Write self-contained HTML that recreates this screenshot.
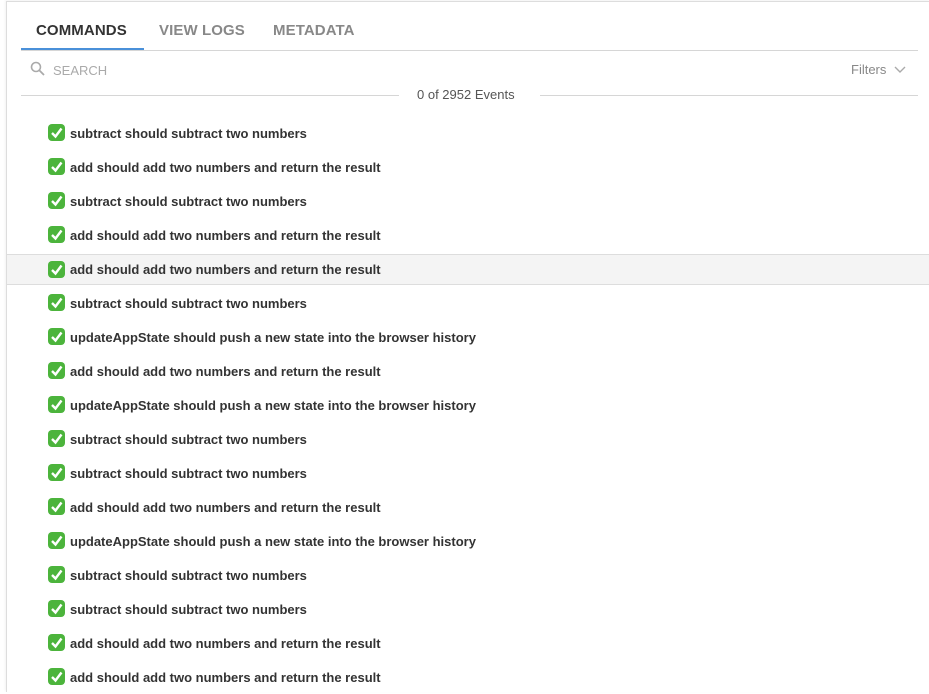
<!DOCTYPE html>
<html><head><style>
body{margin:0;width:929px;height:680px;overflow:hidden;background:#fff;font-family:"Liberation Sans",sans-serif;}
.panel{position:absolute;left:6px;top:1px;width:923px;height:690px;border-left:1px solid #ddd;border-top:1px solid #ddd;box-shadow:-1px -1px 2px rgba(0,0,0,.05);}
.tabs{position:absolute;left:21px;top:0;width:897px;height:50px;border-bottom:1px solid #d6d6d6;}
.tab{position:absolute;top:22px;font-size:15px;font-weight:bold;color:#888;letter-spacing:0.1px}
.tab.a{color:#333}
.ul{position:absolute;left:0;top:48px;width:123px;height:2px;background:#4a90d9}
.search{position:absolute;left:53px;top:63px;font-size:13px;color:#aaa}
.filters{position:absolute;left:851px;top:62px;font-size:13px;color:#888}
.cnt{position:absolute;top:88px;left:21px;width:897px;height:14px}
.cnt .l{position:absolute;top:7px;height:1px;background:#d6d6d6}
.cnt span{position:absolute;left:396px;top:-1px;font-size:13px;color:#555}
.row{position:absolute;left:7px;width:922px;height:34px;}
.row.h{background:#f4f4f4;border-top:1px solid #ddd;border-bottom:1px solid #ddd;box-sizing:border-box;height:31px;margin-top:2px}
.row.h .ck{top:6px}.row.h .t{top:7px}
.ck{position:absolute;left:41px;top:8px;width:17px;height:17px;border-radius:4px;background:#4cb43c}
.ck svg{position:absolute;left:0;top:0}
.t{position:absolute;left:63px;top:10px;font-size:13px;font-weight:bold;color:#333}
</style></head><body>
<div class="panel"></div>
<div class="tabs">
<div class="tab a" style="left:15px">COMMANDS</div>
<div class="tab" style="left:138px">VIEW LOGS</div>
<div class="tab" style="left:252px">METADATA</div>
<div class="ul"></div>
</div>
<svg style="position:absolute;left:30px;top:61px" width="16" height="16"><circle cx="6" cy="6" r="4.5" fill="none" stroke="#aaa" stroke-width="1.6"/><line x1="9.5" y1="9.5" x2="14" y2="14" stroke="#aaa" stroke-width="1.8"/></svg>
<div class="search">SEARCH</div>
<div class="filters">Filters</div>
<svg style="position:absolute;left:894px;top:66px" width="12" height="8"><path d="M1 1 L6 6 L11 1" fill="none" stroke="#aaa" stroke-width="1.4"/></svg>
<div class="cnt"><div class="l" style="left:0;width:378px"></div><span>0 of 2952 Events</span><div class="l" style="left:519px;width:378px"></div></div>
<div id="rows"></div>
<script>
var a="subtract should subtract two numbers",b="add should add two numbers and return the result",c="updateAppState should push a new state into the browser history";
var L=[a,b,a,b,b,a,c,b,c,a,a,b,c,a,a,b,b];
var h="";
for(var i=0;i<L.length;i++){h+='<div class="row'+(i==4?' h':'')+'" style="top:'+(116+34*i)+'px"><div class="ck"><svg width="17" height="17"><path d="M4 9 L7.5 12.5 L13.5 4.5" fill="none" stroke="#fff" stroke-width="2.4"/></svg></div><div class="t">'+L[i]+'</div></div>';}
document.getElementById("rows").innerHTML=h;
</script>
</body></html>
